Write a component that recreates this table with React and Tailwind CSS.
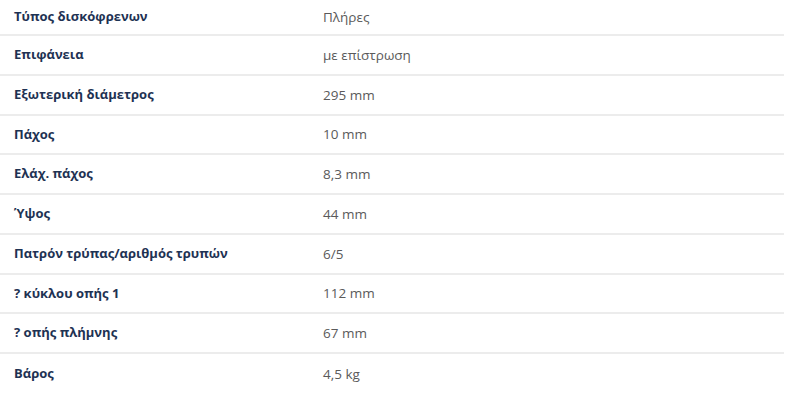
import React from 'react';

const specs = [
  ['Τύπος δισκόφρενων', 'Πλήρες'],
  ['Επιφάνεια', 'με επίστρωση'],
  ['Εξωτερική διάμετρος', '295 mm'],
  ['Πάχος', '10 mm'],
  ['Ελάχ. πάχος', '8,3 mm'],
  ['Ύψος', '44 mm'],
  ['Πατρόν τρύπας/αριθμός τρυπών', '6/5'],
  ['? κύκλου οπής 1', '112 mm'],
  ['? οπής πλήμνης', '67 mm'],
  ['Βάρος', '4,5 kg'],
];

const App = () => {
  return (
    <div className="w-[800px] h-[401px] bg-white overflow-hidden" style={{ fontFamily: '"Open Sans", sans-serif' }}>
      <div className="w-[784px]">
        {specs.map(([label, value], index) => (
          <div
            key={label}
            className={`flex items-center ${index === 0 ? 'h-[36px]' : 'h-[39.75px]'} ${
              index < specs.length - 1 ? 'border-b-2 border-[#ececec]' : ''
            }`}
          >
            <div className="w-[323px] pl-[14px] text-[13px] font-bold text-[#1e3253]">{label}</div>
            <div className="flex-1 text-[13.5px] text-[#5a5a5a]">{value}</div>
          </div>
        ))}
      </div>
    </div>
  );
};

export default App;
